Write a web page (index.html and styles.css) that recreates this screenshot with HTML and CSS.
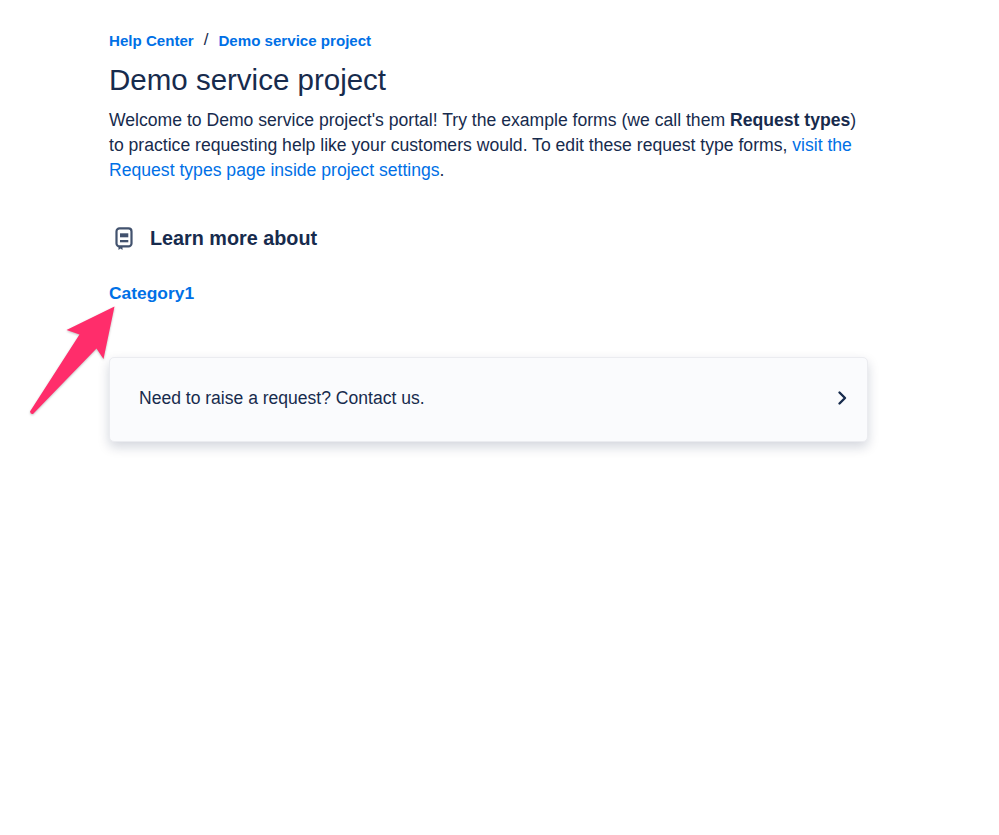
FILE: index.html
```html
<!DOCTYPE html>
<html lang="en">
<head>
    <meta charset="UTF-8">
    <title>Demo service project</title>
    <link rel="stylesheet" href="styles.css">
</head>
<body>

    <div class="container">
        <div class="breadcrumbs">
            <a href="#">Help Center</a>
            <span class="separator">/</span>
            <a href="#">Demo service project</a>
        </div>
        <h1>Demo service project</h1>
        <p class="intro">Welcome to Demo service project's portal! Try the example forms (we call them <strong>Request types</strong>) to practice requesting help like your customers would. To edit these request type forms, <a href="#">visit the Request types page inside project settings</a>.</p>

        <div class="section-title">
            <svg class="book-icon" width="24" height="24" viewBox="0 0 24 24">
                <path d="M7.500 2.400h9a3 3 0 0 1 3 3v12a3 3 0 0 1-3 3h-9a3 3 0 0 1-3-3v-12a3 3 0 0 1 3-3z" fill="none" stroke="#42526e" stroke-width="2.200"/>
                <path d="M6.500 20h4v4l-2-1.400-2 1.400z" fill="#42526e"/>
                <rect x="8" y="7.300" width="8.300" height="4" fill="#42526e"/>
                <rect x="8" y="14" width="8.300" height="2.300" fill="#42526e"/>
            </svg>
            <h2>Learn more about</h2>
        </div>
        <a class="category" href="#">Category1</a>

        <div class="contact-card">
            <span>Need to raise a request? Contact us.</span>
            <svg class="chevron" width="24" height="24" viewBox="0 0 24 24">
                <path d="M9.500 5.500l5.500 5.500-5.500 5.500" fill="none" stroke="#172b4d" stroke-width="2.400" stroke-linecap="round" stroke-linejoin="round"/>
            </svg>
        </div>
    </div>

    <svg class="arrow" width="999" height="835" viewBox="0 0 999 835">
        <path d="M114.500 306.500L66.500 330L79.500 334.500L30 411.500Q30.500 414.500 33 414L96.500 348.500L103.500 359Z" fill="#ff2d6b"/>
    </svg>

</body>
</html>
```

FILE: styles.css
```css
body {
    margin: 0;
    font-family: 'Liberation Sans', Arial, sans-serif;
    background-color: #ffffff;
    color: #172b4d;
}
a {
    color: #0070e6;
    text-decoration: none;
}
.container {
    width: 759px;
    margin-left: 109px;
    padding-top: 31px;
    padding-bottom: 60px;
}
.breadcrumbs {
    display: flex;
    align-items: center;
    gap: 10px;
    height: 18px;
    font-size: 15.100px;
    font-weight: bold;
}
.separator {
    font-weight: normal;
    font-size: 17px;
    color: #172b4d;
}
h1 {
    margin: 13px 0 0;
    font-size: 29.500px;
    line-height: 36px;
    font-weight: normal;
}
.intro {
    margin: 10px 0 0;
    font-size: 17.600px;
    line-height: 25px;
}
.section-title {
    display: flex;
    align-items: center;
    gap: 14px;
    margin-top: 41px;
    height: 28px;
    padding-left: 3px;
}
h2 {
    margin: 0;
    font-size: 19.800px;
    font-weight: bold;
}
.category {
    display: block;
    margin-top: 30px;
    font-size: 17.400px;
    line-height: 22px;
    font-weight: bold;
}
.contact-card {
    display: flex;
    align-items: center;
    justify-content: space-between;
    box-sizing: border-box;
    height: 85px;
    margin-top: 53px;
    padding: 0 13px 2px 29px;
    font-size: 17.550px;
    background-color: #fafbfd;
    border: 1px solid #ebecf0;
    border-radius: 5px;
    box-shadow: 0 5px 12px rgba(9, 30, 66, 0.18);
}
.arrow {
    position: absolute;
    top: 0;
    left: 0;
    pointer-events: none;
    filter: drop-shadow(0 1px 1px rgba(0, 0, 0, 0.25));
}
```
